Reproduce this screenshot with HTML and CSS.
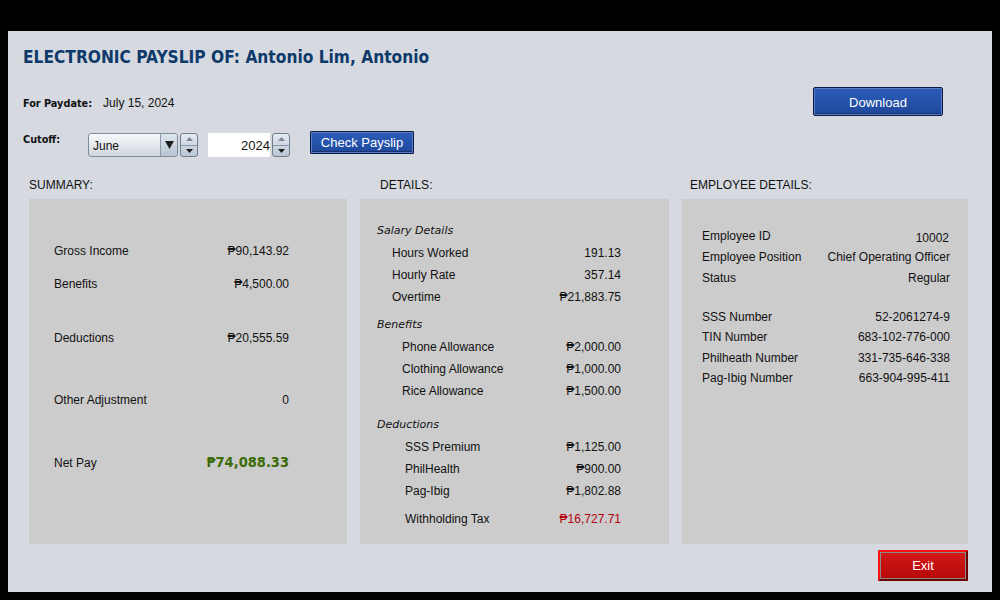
FILE: index.html
```html
<!DOCTYPE html>
<html>
<head>
<meta charset="utf-8">
<link rel="stylesheet" href="styles.css">
</head>
<body>
<div class="window">
  <h1 class="title">ELECTRONIC PAYSLIP OF: Antonio Lim, Antonio</h1>

  <div class="paydate-row">
    <div class="paydate">
      <span class="blabel">For Paydate:</span>
      <span class="pd-value">July 15, 2024</span>
    </div>
    <button class="btn btn-blue btn-download">Download</button>
  </div>

  <div class="cutoff-row">
    <span class="blabel cutoff-label">Cutoff:</span>
    <div class="combo">
      <span class="combo-text">June</span>
      <span class="combo-arrow">
        <svg width="9" height="8" viewBox="0 0 9 8"><path d="M0 0H9L4.5 8Z" fill="#1e1e1e"/></svg>
      </span>
    </div>
    <div class="spinner">
      <span class="spin-half"><svg width="7" height="4" viewBox="0 0 7 4"><path d="M0 4H7L3.5 0Z" fill="#7b8796"/></svg></span>
      <span class="spin-half"><svg width="7" height="4" viewBox="0 0 7 4"><path d="M0 0H7L3.5 4Z" fill="#1e1e1e"/></svg></span>
    </div>
    <div class="year-field">2024</div>
    <div class="spinner">
      <span class="spin-half"><svg width="7" height="4" viewBox="0 0 7 4"><path d="M0 4H7L3.5 0Z" fill="#7b8796"/></svg></span>
      <span class="spin-half"><svg width="7" height="4" viewBox="0 0 7 4"><path d="M0 0H7L3.5 4Z" fill="#1e1e1e"/></svg></span>
    </div>
    <button class="btn btn-blue btn-check">Check Payslip</button>
  </div>

  <div class="columns">
    <section class="col col-summary">
      <div class="col-label">SUMMARY:</div>
      <div class="panel summary">
        <div class="srow s1"><span>Gross Income</span><span>₱90,143.92</span></div>
        <div class="srow s2"><span>Benefits</span><span>₱4,500.00</span></div>
        <div class="srow s3"><span>Deductions</span><span>₱20,555.59</span></div>
        <div class="srow s4"><span>Other Adjustment</span><span>0</span></div>
        <div class="srow s5"><span>Net Pay</span><span class="netpay">₱74,088.33</span></div>
      </div>
    </section>

    <section class="col col-details">
      <div class="col-label">DETAILS:</div>
      <div class="panel details">
        <div class="dhead dh1">Salary Details</div>
        <div class="drow ind1"><span>Hours Worked</span><span>191.13</span></div>
        <div class="drow ind1"><span>Hourly Rate</span><span>357.14</span></div>
        <div class="drow ind1"><span>Overtime</span><span>₱21,883.75</span></div>
        <div class="dhead dh2">Benefits</div>
        <div class="drow ind2"><span>Phone Allowance</span><span>₱2,000.00</span></div>
        <div class="drow ind2"><span>Clothing Allowance</span><span>₱1,000.00</span></div>
        <div class="drow ind2"><span>Rice Allowance</span><span>₱1,500.00</span></div>
        <div class="dhead dh3">Deductions</div>
        <div class="drow ind3"><span>SSS Premium</span><span>₱1,125.00</span></div>
        <div class="drow ind3"><span>PhilHealth</span><span>₱900.00</span></div>
        <div class="drow ind3"><span>Pag-Ibig</span><span>₱1,802.88</span></div>
        <div class="drow ind3 wtax"><span>Withholding Tax</span><span class="red">₱16,727.71</span></div>
      </div>
    </section>

    <section class="col col-emp">
      <div class="col-label">EMPLOYEE DETAILS:</div>
      <div class="panel emp">
        <div class="erow e-first"><span>Employee ID</span><span class="low">10002</span></div>
        <div class="erow"><span>Employee Position</span><span>Chief Operating Officer</span></div>
        <div class="erow"><span>Status</span><span>Regular</span></div>
        <div class="erow2 e-gap"><span>SSS Number</span><span>52-2061274-9</span></div>
        <div class="erow2"><span>TIN Number</span><span>683-102-776-000</span></div>
        <div class="erow2"><span>Philheath Number</span><span>331-735-646-338</span></div>
        <div class="erow2"><span>Pag-Ibig Number</span><span>663-904-995-411</span></div>
      </div>
    </section>
  </div>

  <div class="footer">
    <button class="btn btn-exit">Exit</button>
  </div>
</div>
</body>
</html>
```

FILE: styles.css
```css
* { box-sizing: border-box; }
html, body { margin: 0; padding: 0; }
body {
  background: #000;
  width: 1000px;
  height: 600px;
  overflow: hidden;
  font-family: "Liberation Sans", Arial, "DejaVu Sans", sans-serif;
  font-size: 12px;
  color: #111;
}
.window {
  margin: 31px 8px 0 8px;
  height: 561px;
  background: #d6d9e0;
  display: flex;
  flex-direction: column;
  padding: 0 0 0 15px;
}
.title {
  margin: 15px 0 0 0;
  font-family: "DejaVu Sans Condensed", "DejaVu Sans", sans-serif;
  font-stretch: condensed;
  font-weight: bold;
  font-size: 17.2px;
  line-height: 22px;
  color: #0e3a6a;
}
.blabel {
  font-family: "DejaVu Sans Condensed", "DejaVu Sans", sans-serif;
  font-stretch: condensed;
  font-weight: bold;
  font-size: 10.8px;
  color: #111;
}
.paydate-row {
  margin-top: 19px;
  height: 29px;
  display: flex;
  align-items: center;
  justify-content: space-between;
  padding-right: 49px;
}
.paydate { display: flex; align-items: center; margin-top: 3px; }
.pd-value { margin-left: 11px; }
.btn {
  font-family: "Liberation Sans", Arial, sans-serif;
  color: #fff;
  cursor: pointer;
  padding: 0;
}
.btn-blue {
  background: linear-gradient(#2b5cb8, #2451a8 60%, #1f4799);
  border: 1px solid #081a45;
  box-shadow: inset 0 0 0 1px #5b7cc0, inset 0 -1px 0 1px #17326f;
}
.btn-download {
  width: 130px;
  height: 29px;
  font-size: 13px;
  border-radius: 2px;
  padding-top: 2px;
}
.cutoff-row {
  margin-top: 15px;
  display: flex;
  align-items: flex-start;
  height: 26px;
}
.cutoff-label { width: 65px; margin-top: 2px; }
.combo {
  margin-top: 2px;
  width: 90px;
  height: 24px;
  border: 1px solid #7f8c99;
  border-radius: 3px;
  background: linear-gradient(#f7f8fa, #e3e7ec 55%, #d0d6de);
  display: flex;
  align-items: center;
  justify-content: space-between;
  overflow: hidden;
}
.combo-text { padding-left: 4px; padding-top: 2px; }
.combo-arrow {
  width: 17px;
  height: 22px;
  border-left: 1px solid #8e9aa7;
  background: linear-gradient(#dfe6ee, #b8c4d2);
  display: flex;
  align-items: center;
  justify-content: center;
}
.spinner {
  margin-top: 2px;
  margin-left: 2px;
  width: 18px;
  height: 24px;
  border: 1px solid #6f7f90;
  border-radius: 3px;
  overflow: hidden;
  display: flex;
  flex-direction: column;
  background: linear-gradient(#e4eaf0, #b9c6d4);
}
.spin-half {
  flex: 1;
  display: flex;
  align-items: center;
  justify-content: center;
}
.spin-half + .spin-half { border-top: 1px solid #8a98a8; }
.year-field {
  margin-top: 2px;
  margin-left: 10px;
  width: 62px;
  height: 24px;
  background: #fff;
  text-align: right;
  line-height: 25px;
  font-size: 13px;
  padding-right: 0;
}
.btn-check {
  margin-left: 20px;
  width: 104px;
  height: 23px;
  font-size: 13px;
  line-height: 20px;
  border-radius: 1px;
}
.columns {
  margin-top: 21px;
  margin-left: 6px;
  display: flex;
  gap: 13px;
}
.col-label { line-height: 14px; height: 14px; margin-bottom: 7px; }
.col-details .col-label { padding-left: 20px; }
.col-emp .col-label { padding-left: 8px; }
.panel {
  background: #cccccc;
  height: 345px;
  display: flex;
  flex-direction: column;
}
.summary { width: 318px; padding: 44px 58px 0 25px; }
.details { width: 309px; padding: 21px 48px 0 17px; }
.emp { width: 286px; padding: 27px 18px 0 20px; }
.srow, .drow, .erow, .erow2 {
  display: flex;
  justify-content: space-between;
  align-items: center;
}
.srow { line-height: 16px; }
.s2 { margin-top: 17px; }
.s3 { margin-top: 38px; }
.s4 { margin-top: 46px; }
.s5 { margin-top: 47px; }
.netpay {
  font-family: "DejaVu Sans Condensed", "DejaVu Sans", sans-serif;
  font-stretch: condensed;
  font-weight: bold;
  font-size: 14.5px;
  color: #3b6b06;
  margin-top: -2px;
}
.dhead {
  font-family: "DejaVu Sans", sans-serif;
  font-style: italic;
  font-size: 11px;
  line-height: 22px;
}
.dh2 { margin-top: 6px; }
.dh3 { margin-top: 12px; }
.drow { line-height: 22px; }
.ind1 { padding-left: 15px; }
.ind2 { padding-left: 25px; }
.ind3 { padding-left: 28px; }
.wtax { margin-top: 6px; }
.red { color: #b4000c; }
.erow { line-height: 21px; }
.erow2 { line-height: 20.4px; }
.low { position: relative; top: 2px; padding-right: 1px; }
.e-gap { margin-top: 18px; }
.footer {
  display: flex;
  justify-content: flex-end;
  padding-right: 24px;
  margin-top: 6px;
}
.btn-exit {
  width: 90px;
  height: 31px;
  font-size: 13px;
  background: linear-gradient(#d51a1a, #c20e0e 60%, #b60909);
  border: 2px solid #ff1010;
  border-right-color: #6a0000;
  border-bottom-color: #6a0000;
  box-shadow: inset 0 0 0 1px #8a8a8a;
  border-radius: 1px;
}
```
